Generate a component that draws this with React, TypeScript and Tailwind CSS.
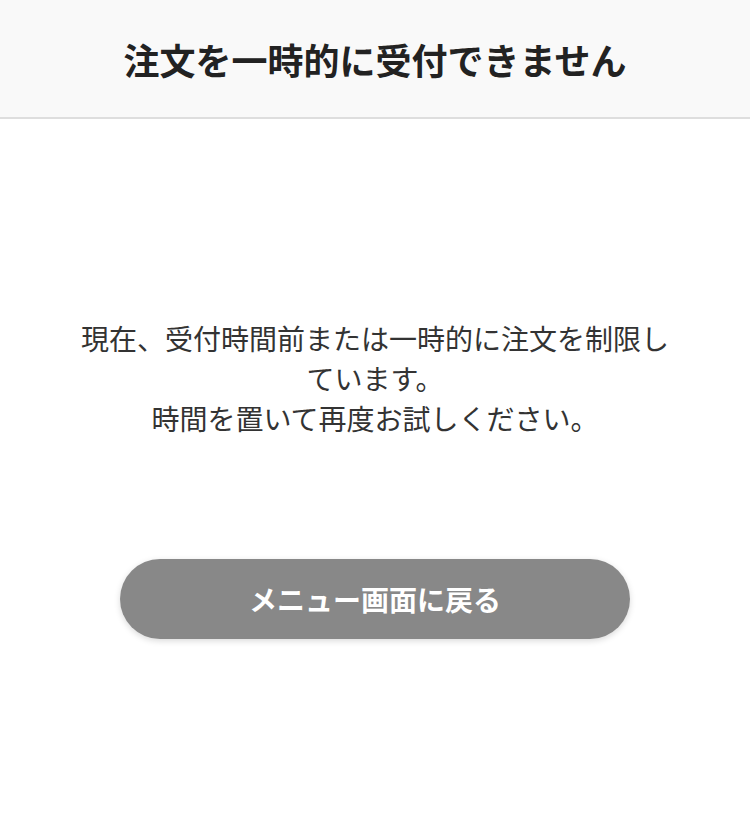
export default function App() {
  return (
    <div
      className="min-h-[840px] bg-white text-[#333]"
      style={{ fontFamily: '"Noto Sans CJK JP", "Noto Sans", sans-serif' }}
    >
      <header className="flex h-[119px] items-center justify-center border-b-2 border-[#dedede] bg-[#f9f9f9]">
        <h1 className="text-[36px] font-bold leading-none text-[#222]">注文を一時的に受付できません</h1>
      </header>

      <main className="flex flex-col items-center px-[75px] pt-[199px]">
        <p className="text-center text-[28px] leading-[40px] text-[#333]">
          現在、受付時間前または一時的に注文を制限しています。
          <br />
          時間を置いて再度お試しください。
        </p>

        <button
          type="button"
          className="mt-[121px] flex h-[80px] w-[510px] items-center justify-center rounded-full bg-[#888888] text-[28px] font-bold text-white shadow-[0_2px_6px_rgba(0,0,0,0.15)]"
        >
          メニュー画面に戻る
        </button>
      </main>
    </div>
  );
}
